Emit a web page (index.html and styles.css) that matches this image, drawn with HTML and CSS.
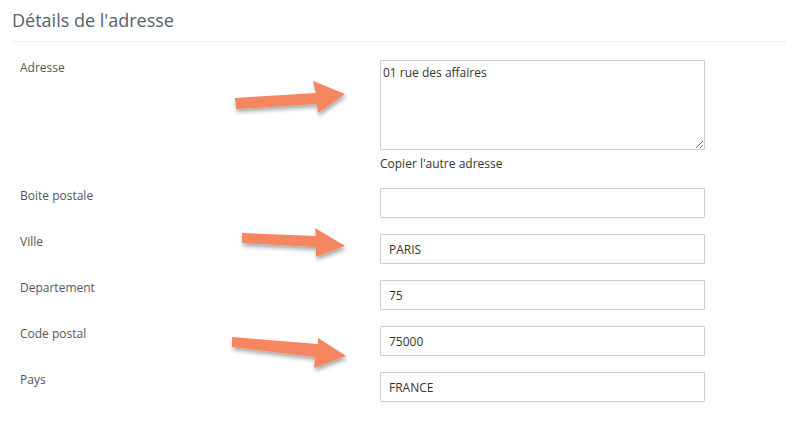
FILE: index.html
```html
<!DOCTYPE html>
<html lang="fr">

<head>
    <meta charset="UTF-8">
    <meta name="viewport" content="width=device-width, initial-scale=1.0">
    <title>Détails de l'adresse</title>

    <link rel="stylesheet" href="styles.css">
</head>

<body>
    <div class="page">
        <h3 class="section-title">Détails de l'adresse</h3>

        <form class="address-form">
            <label class="field-label" for="adresse">Adresse</label>
            <div class="field">
                <textarea id="adresse" class="field-area">01 rue des affaires</textarea>
                <div class="field-help">Copier l'autre adresse</div>
            </div>

            <label class="field-label" for="bp">Boite postale</label>
            <div class="field">
                <input type="text" id="bp" class="field-input" value="">
            </div>

            <label class="field-label" for="ville">Ville</label>
            <div class="field">
                <input type="text" id="ville" class="field-input" value="PARIS">
            </div>

            <label class="field-label" for="dep">Departement</label>
            <div class="field">
                <input type="text" id="dep" class="field-input" value="75">
            </div>

            <label class="field-label" for="cp">Code postal</label>
            <div class="field">
                <input type="text" id="cp" class="field-input" value="75000">
            </div>

            <label class="field-label" for="pays">Pays</label>
            <div class="field">
                <input type="text" id="pays" class="field-input" value="FRANCE">
            </div>
        </form>

        <!-- annotation arrows drawn over the form -->
        <svg class="arrows" width="787" height="437" viewBox="0 0 787 437">
            <defs>
                <filter id="shadow" x="-10%" y="-30%" width="130%" height="170%">
                    <feDropShadow dx="1" dy="3" stdDeviation="2" flood-color="#000" flood-opacity="0.35"/>
                </filter>
            </defs>
            <g fill="#f4875f" filter="url(#shadow)">
                <polygon points="235,98 316,93 313,81 345,94 318,113 317,104 236,109"/>
                <polygon points="242,233 316,236 315,228 345,246 316,257 316,247 242,243"/>
                <polygon points="232,337 318,344 318,338 346,356 314,368 315,357 232,347"/>
            </g>
        </svg>
    </div>
</body>

</html>
```

FILE: styles.css
```css
body {
    margin: 0;
    font-family: "Open Sans", Arial, sans-serif;
    background-color: #fff;
    color: #555;
}

.page {
    position: relative;
    width: 787px;
    height: 437px;
    overflow: hidden;
}

.section-title {
    margin: 0 0 0 12px;
    padding: 8px 0 9px 0;
    font-size: 18px;
    font-weight: normal;
    line-height: 24px;
    color: #56616b;
    border-bottom: 1px solid #eee;
}

.address-form {
    display: grid;
    grid-template-columns: 360px 325px;
    row-gap: 16px;
    padding: 18px 0 0 20px;
}

.field-label {
    font-size: 12px;
    line-height: 16px;
    color: #555;
}

.field {
    display: flex;
    flex-direction: column;
}

.field-input,
.field-area {
    box-sizing: border-box;
    width: 325px;
    margin: 0;
    border: 1px solid #ccc;
    border-radius: 1px;
    font-family: "Open Sans", Arial, sans-serif;
    font-size: 12px;
    color: #333;
    background-color: #fff;
}

.field-input {
    height: 30px;
    padding: 0 8px;
}

.field-area {
    height: 90px;
    padding: 3px 2px;
    line-height: 17px;
    resize: vertical;
}

.field-help {
    margin-top: 5px;
    font-size: 12px;
    line-height: 17px;
    color: #333;
}

.arrows {
    position: absolute;
    left: 0;
    top: 0;
    pointer-events: none;
}
```
